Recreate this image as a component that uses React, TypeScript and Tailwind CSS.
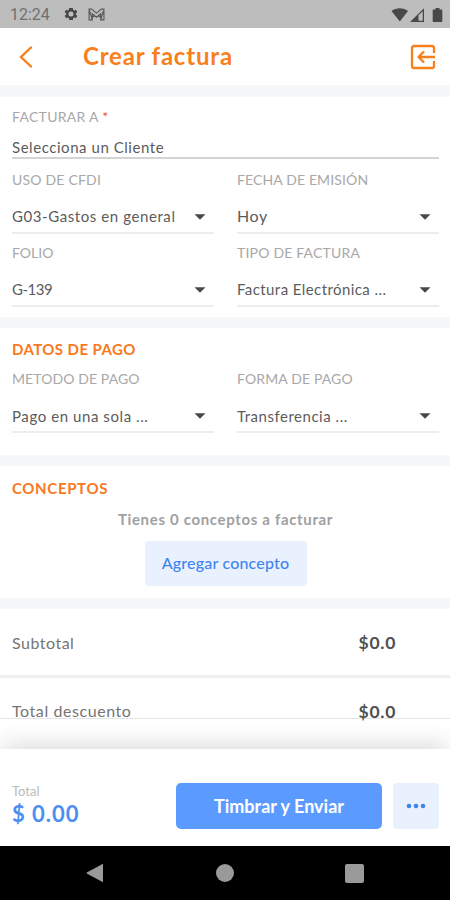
import React from 'react';

function Caret() {
  return (
    <svg width="12" height="6" viewBox="0 0 12 6" className="mr-[8px] shrink-0">
      <path d="M0.5 0.3h11L6 5.8z" fill="#484848" />
    </svg>
  );
}

function Label({ children, spacing }: { children: React.ReactNode; spacing: string }) {
  return <div className={`h-5 whitespace-nowrap text-[14px] leading-5 text-[#a8a8a8] ${spacing}`}>{children}</div>;
}

function Field({ label, value, labelSpacing, valueSpacing }: { label: string; value: string; labelSpacing: string; valueSpacing: string }) {
  return (
    <div className="w-[202px]">
      <Label spacing={labelSpacing}>{label}</Label>
      <div className="mt-[13px] flex h-[31px] items-start justify-between border-b-2 border-[#ededed]">
        <span className={`whitespace-nowrap text-[#5c5c5c] ${valueSpacing}`}>{value}</span>
        <span className="flex h-[27px] items-center"><Caret /></span>
      </div>
    </div>
  );
}

function Band({ className = 'h-[11px]' }: { className?: string }) {
  return <div className={`shrink-0 bg-[#f5f7f8] ${className}`} />;
}

export default function App() {
  return (
    <div className="flex h-[900px] w-[450px] flex-col overflow-hidden bg-white font-['Lato','Open_Sans',sans-serif]">
      <div className="flex h-7 shrink-0 items-center bg-[#bdbdbd] pl-[10px] font-['Roboto',sans-serif] text-[#707070]">
        <span className="w-[53px] pt-0.5 text-[16px] leading-5">12:24</span>
        <svg width="16" height="16" viewBox="0 0 24 24" fill="#484848">
          <path fillRule="evenodd" d="M19.4 13c.1-.6.1-1.4 0-2l2.1-1.7-2-3.6-2.6 1a8 8 0 0 0-1.7-1l-.4-2.7H9.2l-.4 2.7a8 8 0 0 0-1.7 1l-2.6-1-2 3.6L4.6 11c-.1.6-.1 1.4 0 2l-2.1 1.7 2 3.6 2.6-1a8 8 0 0 0 1.7 1l.4 2.7h5.6l.4-2.7a8 8 0 0 0 1.7-1l2.6 1 2-3.6zM12 8.2a3.8 3.8 0 1 1 0 7.6 3.8 3.8 0 0 1 0-7.6z" />
        </svg>
        <svg width="17" height="13" viewBox="0 0 18 14" className="ml-[9px]" fill="none" stroke="#585858" strokeWidth="1.2">
          <path d="M1 1.2h2.8L9 5.5l5.2-4.3H17v11.6h-3.5V6.2L9 10 4.500 6.200v6.600H1zM4.500 12.800L1.500 3M13.500 12.800L16.500 3M4.500 10l3-2.200M13.500 10l-3-2.200" />
        </svg>
        <svg width="54" height="18" viewBox="0 0 54 18" className="ml-auto mr-[6px] mt-px" fill="#484848">
          <path d="M1.500 5C6 1.300 13.500 1.300 18 5L9.800 15.500z" />
          <path fillRule="evenodd" d="M20 16L34 2.200V16zM28.500 9.200v5.500h4.200V5.300z" />
          <path d="M43.500 3.500h2V2h4v1.500h2q.8 0 .8.800v10.900q0 .8-.8.800h-8q-.8 0-.8-.8V4.300q0-.8.8-.8z" />
        </svg>
      </div>

      <header className="flex h-[57px] shrink-0 items-center pl-[19px] pr-[14px]">
        <svg width="14" height="22" viewBox="0 0 14 22" fill="none" stroke="#f97f1c" strokeWidth="2.400" strokeLinecap="round">
          <path d="M12 1.500L2 11l10 9.500" />
        </svg>
        <h1 className="mb-[2px] ml-[50px] whitespace-nowrap text-[24px] font-bold leading-8 tracking-[0.8px] text-[#f97f1c]">Crear factura</h1>
        <svg width="26" height="26" viewBox="0 0 26 26" className="ml-auto" fill="none" stroke="#f97f1c" strokeWidth="2.300" strokeLinejoin="round">
          <path d="M24 9V4q0-2-2-2H4Q2 2 2 4v18q0 2 2 2h18q2 0 2-2v-5" />
          <path d="M25 13H9M14 7.500L8.500 13l5.500 5.500" />
        </svg>
      </header>
      <Band className="h-3" />

      <section className="flex h-[220px] shrink-0 flex-col pl-3 pr-[11px] pt-[10px]">
        <Label spacing="tracking-[0.3px]">FACTURAR A <span className="text-[#ee4f43]">*</span></Label>
        <div className="mt-[7px] h-[25px] border-b-2 border-[#d3d4d3] text-[15px] leading-[27px] tracking-[0.55px] text-[#5c5c5c]">Selecciona un Cliente</div>
        <div className="mt-[11px] flex justify-between">
          <Field label="USO DE CFDI" value="G03-Gastos en general" labelSpacing="tracking-[0.2px]" valueSpacing="text-[15px] leading-[27px] tracking-[0.58px]" />
          <Field label="FECHA DE EMISIÓN" value="Hoy" labelSpacing="tracking-[0.13px]" valueSpacing="text-[16px] leading-[26px] tracking-[0.6px]" />
        </div>
        <div className="mt-[9px] flex justify-between">
          <Field label="FOLIO" value="G-139" labelSpacing="tracking-[0px]" valueSpacing="text-[15px] leading-[27px] tracking-[-0.5px]" />
          <Field label="TIPO DE FACTURA" value="Factura Electrónica ..." labelSpacing="tracking-[0.2px]" valueSpacing="text-[15px] leading-[27px] tracking-[0.42px]" />
        </div>
      </section>
      <Band />

      <section className="h-[127px] shrink-0 pl-3 pr-[11px] pt-[11px]">
        <h2 className="h-5 text-[15px] font-bold leading-5 tracking-[0.42px] text-[#f97820]">DATOS DE PAGO</h2>
        <div className="mt-[10px] flex justify-between">
          <Field label="METODO DE PAGO" value="Pago en una sola ..." labelSpacing="tracking-[0.1px]" valueSpacing="text-[15px] leading-[28px] tracking-[0.58px]" />
          <Field label="FORMA DE PAGO" value="Transferencia ..." labelSpacing="tracking-[0.13px]" valueSpacing="text-[15px] leading-[28px] tracking-[0.52px]" />
        </div>
      </section>
      <Band />

      <section className="flex h-[132px] shrink-0 flex-col items-center pl-3 pr-[11px] pt-[12px]">
        <h2 className="h-5 self-start text-[15px] font-bold leading-5 tracking-[0.65px] text-[#f97820]">CONCEPTOS</h2>
        <p className="mt-[11px] h-5 whitespace-nowrap text-[15px] font-bold leading-5 tracking-[0.66px] text-[#a0a0a0]">Tienes 0 conceptos a facturar</p>
        <button className="mt-[12px] h-[45px] w-[162px] whitespace-nowrap rounded-[4px] bg-[#eaf1fe] pb-[2px] text-[16px] font-medium tracking-[0.2px] text-[#4085ee]">Agregar concepto</button>
      </section>
      <Band />

      <section className="h-[140px] shrink-0 overflow-hidden">
        <div className="flex h-[69px] items-center justify-between border-b-[3px] border-[#efefef] pl-3 pr-[54px] pt-[2px]">
          <span className="text-[16px] tracking-[0.5px] text-[#757575]">Subtotal</span>
          <span className="text-[17.5px] font-bold tracking-[0.7px] text-[#505050]">$0.0</span>
        </div>
        <div className="flex h-[41px] items-end justify-between border-b border-[#e4e4e4] pl-3 pr-[54px]">
          <span className="h-[18px] text-[16px] leading-[22px] tracking-[0.57px] text-[#757575]">Total descuento</span>
          <span className="h-[18px] text-[17.5px] font-bold leading-[23px] tracking-[0.7px] text-[#505050]">$0.0</span>
        </div>
      </section>

      <footer className="relative flex h-[97px] shrink-0 items-center bg-white pl-3 pr-[11px] pt-[16px] shadow-[0_-8px_22px_-3px_rgba(0,0,0,0.14)]">
        <div className="w-[164px]">
          <div className="h-[17px] text-[13px] leading-[15px] text-[#b9bbbd]">Total</div>
          <div className="h-[26px] whitespace-nowrap text-[22px] font-bold leading-[26px] tracking-[1px] text-[#4b8ff4]">$ 0.00</div>
        </div>
        <button className="h-[46px] w-[206px] whitespace-nowrap rounded-[5px] bg-[#5b9bff] pt-[2px] text-[18px] font-bold text-white">Timbrar y Enviar</button>
        <button className="ml-auto flex h-[46px] w-[46px] items-center justify-center rounded-[4px] bg-[#eaf1fe]">
          <svg width="20" height="6" viewBox="0 0 20 6" fill="#4085ee"><circle cx="3" cy="3" r="2.300" /><circle cx="10" cy="3" r="2.300" /><circle cx="17" cy="3" r="2.300" /></svg>
        </button>
      </footer>

      <nav className="relative flex h-[54px] shrink-0 items-center bg-black pl-[86px] pr-[86px]">
        <svg width="18" height="20" viewBox="0 0 18 20" fill="#9a9a9a"><path d="M17 .8v18.400L.8 10.500q-.7-.5 0-1z" /></svg>
        <div className="ml-[112px] h-[18px] w-[18px] rounded-full bg-[#9a9a9a]" />
        <div className="ml-auto h-[19px] w-[19px] rounded-[2px] bg-[#9a9a9a]" />
      </nav>
    </div>
  );
}
